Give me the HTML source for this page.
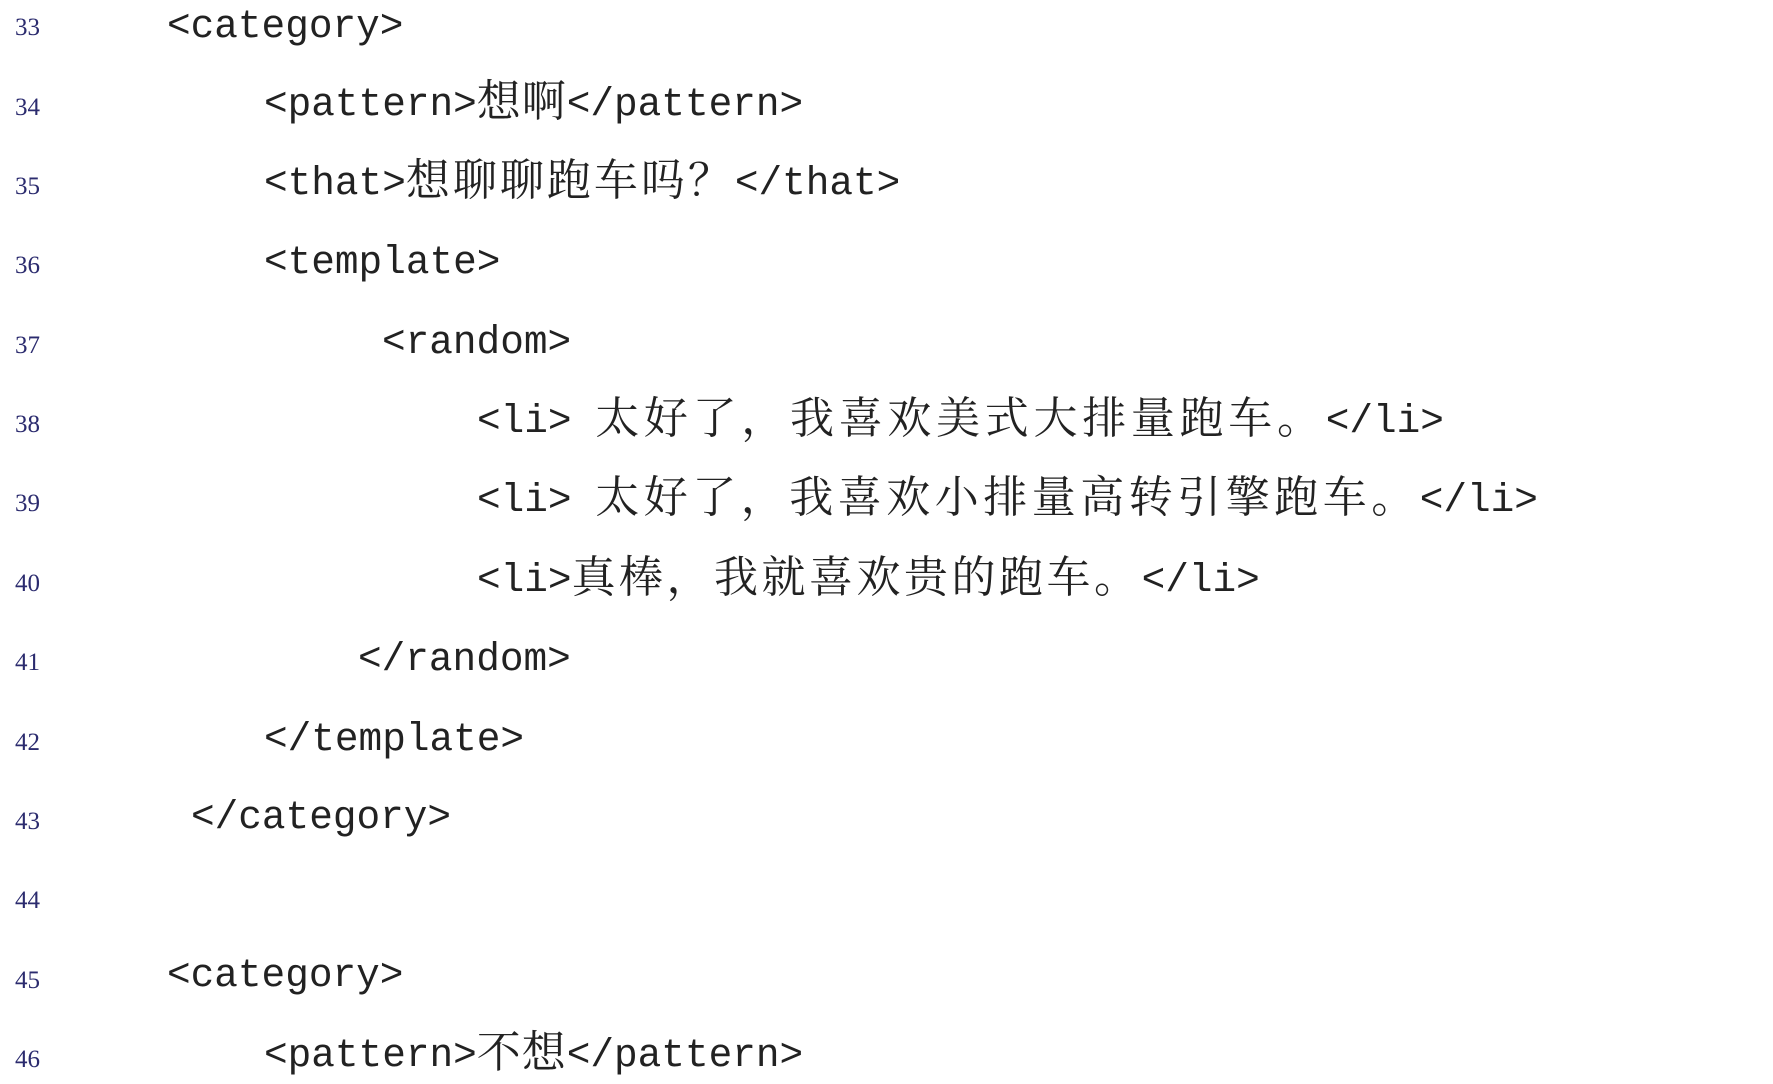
<!DOCTYPE html>
<html><head><meta charset="utf-8"><style>
html,body{margin:0;padding:0;background:#fff;width:1773px;height:1084px;overflow:hidden;position:relative}
.n{position:absolute;left:15px;width:40px;height:50px;line-height:50px;font-family:"Liberation Serif",serif;font-size:25px;color:#2b2b6e}
.c{position:absolute;height:50px;line-height:50px;font-family:"Liberation Mono","Noto Serif CJK SC",monospace;font-size:39.4px;color:#222;white-space:pre}
.z{font-family:"Noto Serif CJK SC","Noto Sans CJK SC",serif;font-size:44px;line-height:1;vertical-align:-1px}
</style></head><body>
<div class="n" style="top:3px">33</div><div class="c" style="top:2px;left:167px">&lt;category&gt;</div>
<div class="n" style="top:83px">34</div><div class="c" style="top:75px;left:264px">&lt;pattern&gt;<span class="z" style="letter-spacing:1px">想啊</span>&lt;/pattern&gt;</div>
<div class="n" style="top:162px">35</div><div class="c" style="top:154px;left:264px">&lt;that&gt;<span class="z" style="letter-spacing:3px">想聊聊跑车吗？</span>&lt;/that&gt;</div>
<div class="n" style="top:241px">36</div><div class="c" style="top:238px;left:264px">&lt;template&gt;</div>
<div class="n" style="top:321px">37</div><div class="c" style="top:318px;left:382px">&lt;random&gt;</div>
<div class="n" style="top:400px">38</div><div class="c" style="top:392px;left:477px">&lt;li&gt; <span class="z" style="letter-spacing:4.7px">太好了，我喜欢美式大排量跑车。</span>&lt;/li&gt;</div>
<div class="n" style="top:479px">39</div><div class="c" style="top:471px;left:477px">&lt;li&gt; <span class="z" style="letter-spacing:4.5px">太好了，我喜欢小排量高转引擎跑车。</span>&lt;/li&gt;</div>
<div class="n" style="top:559px">40</div><div class="c" style="top:551px;left:477px">&lt;li&gt;<span class="z" style="letter-spacing:3.5px">真棒，我就喜欢贵的跑车。</span>&lt;/li&gt;</div>
<div class="n" style="top:638px">41</div><div class="c" style="top:635px;left:358px">&lt;/random&gt;</div>
<div class="n" style="top:718px">42</div><div class="c" style="top:715px;left:264px">&lt;/template&gt;</div>
<div class="n" style="top:797px">43</div><div class="c" style="top:793px;left:191px">&lt;/category&gt;</div>
<div class="n" style="top:876px">44</div>
<div class="n" style="top:956px">45</div><div class="c" style="top:951px;left:167px">&lt;category&gt;</div>
<div class="n" style="top:1035px">46</div><div class="c" style="top:1026px;left:264px">&lt;pattern&gt;<span class="z" style="letter-spacing:1px">不想</span>&lt;/pattern&gt;</div>
</body></html>
